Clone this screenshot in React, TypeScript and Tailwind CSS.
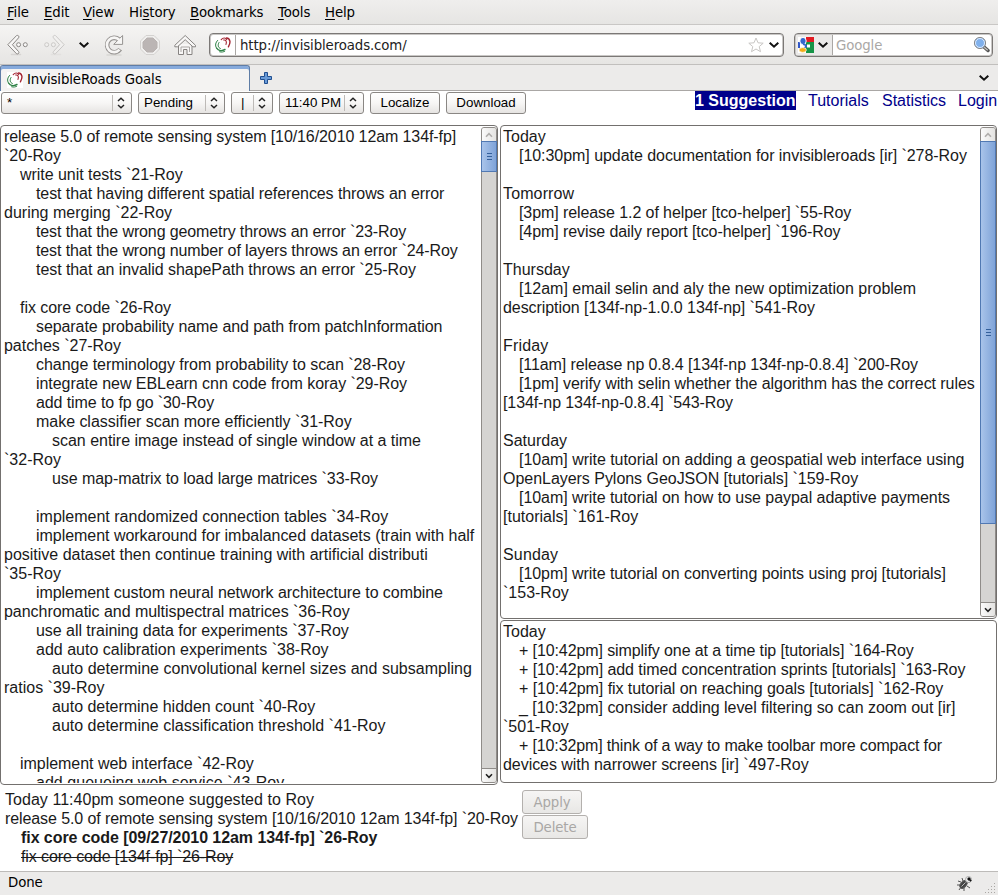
import React from "react";

// [indent level, text, width adjustment of the whole line in px]
type Line = [number, string, number?];

const goals: Line[] = [
  [0, "release 5.0 of remote sensing system [10/16/2010 12am 134f-fp]", -6],
  [0, "`20-Roy"],
  [1, "write unit tests `21-Roy", -1],
  [2, "test that having different spatial references throws an error", -5],
  [0, "during merging `22-Roy"],
  [2, "test that the wrong geometry throws an error `23-Roy", -6],
  [2, "test that the wrong number of layers throws an error `24-Roy", -7],
  [2, "test that an invalid shapePath throws an error `25-Roy", -3.5],
  [0, ""],
  [1, "fix core code `26-Roy", -1],
  [2, "separate probability name and path from patchInformation", -4.5],
  [0, "patches `27-Roy", -0.5],
  [2, "change terminology from probability to scan `28-Roy", -2],
  [2, "integrate new EBLearn cnn code from koray `29-Roy", -2.5],
  [2, "add time to fp go `30-Roy", -2.5],
  [2, "make classifier scan more efficiently `31-Roy", -1.5],
  [3, "scan entire image instead of single window at a time", -1],
  [0, "`32-Roy"],
  [3, "use map-matrix to load large matrices `33-Roy", -3],
  [0, ""],
  [2, "implement randomized connection tables `34-Roy"],
  [2, "implement workaround for imbalanced datasets (train with half", -2],
  [0, "positive dataset then continue training with artificial distributi", -0.5],
  [0, "`35-Roy"],
  [2, "implement custom neural network architecture to combine", -3],
  [0, "panchromatic and multispectral matrices `36-Roy", -2],
  [2, "use all training data for experiments `37-Roy", -2],
  [2, "add auto calibration experiments `38-Roy"],
  [3, "auto determine convolutional kernel sizes and subsampling", 1],
  [0, "ratios `39-Roy"],
  [3, "auto determine hidden count `40-Roy", -1],
  [3, "auto determine classification threshold `41-Roy"],
  [0, ""],
  [1, "implement web interface `42-Roy", -1],
  [2, "add queueing web service `43-Roy", 1],
];

const schedule: Line[] = [
  [0, "Today"],
  [1, "[10:30pm] update documentation for invisibleroads [ir] `278-Roy", -3],
  [0, ""],
  [0, "Tomorrow", 1],
  [1, "[3pm] release 1.2 of helper [tco-helper] `55-Roy", -4],
  [1, "[4pm] revise daily report [tco-helper] `196-Roy", -4],
  [0, ""],
  [0, "Thursday"],
  [1, "[12am] email selin and aly the new optimization problem", -0.5],
  [0, "description [134f-np-1.0.0 134f-np] `541-Roy", -3],
  [0, ""],
  [0, "Friday", 1],
  [1, "[11am] release np 0.8.4 [134f-np 134f-np-0.8.4] `200-Roy", -5.5],
  [1, "[1pm] verify with selin whether the algorithm has the correct rules", -5],
  [0, "[134f-np 134f-np-0.8.4] `543-Roy", -3],
  [0, ""],
  [0, "Saturday"],
  [1, "[10am] write tutorial on adding a geospatial web interface using", -2],
  [0, "OpenLayers Pylons GeoJSON [tutorials] `159-Roy", -1.5],
  [1, "[10am] write tutorial on how to use paypal adaptive payments", -3],
  [0, "[tutorials] `161-Roy"],
  [0, ""],
  [0, "Sunday", 1],
  [1, "[10pm] write tutorial on converting points using proj [tutorials]", -3.5],
  [0, "`153-Roy"],
];

const finished: Line[] = [
  [0, "Today"],
  [1, "+ [10:42pm] simplify one at a time tip [tutorials] `164-Roy", -6],
  [1, "+ [10:42pm] add timed concentration sprints [tutorials] `163-Roy", -5],
  [1, "+ [10:42pm] fix tutorial on reaching goals [tutorials] `162-Roy", -4],
  [1, "_ [10:32pm] consider adding level filtering so can zoom out [ir]", -3],
  [0, "`501-Roy"],
  [1, "+ [10:32pm] think of a way to make toolbar more compact for", -8],
  [0, "devices with narrower screens [ir] `497-Roy", -2],
];

const indents = ["", "pl-4", "pl-8", "pl-12"];

const tracking = (text: string, adjust = 0) =>
  adjust ? { letterSpacing: (adjust / text.length).toFixed(4) + "px" } : undefined;

function Lines({ lines }: { lines: Line[] }) {
  return (
    <div className="min-w-0 flex-1 overflow-hidden whitespace-pre text-[16px] leading-[19px] text-[#1a1a1a]">
      {lines.map(([level, text, adjust], i) => (
        <div key={i} className={"h-[19px] " + indents[level]} style={tracking(text, adjust)}>{text}</div>
      ))}
    </div>
  );
}

function Chevron({ className = "" }: { className?: string }) {
  return (
    <svg className={"shrink-0 " + className} width="12" height="8" viewBox="0 0 12 8" fill="none" stroke="#111" strokeWidth="2">
      <path d="M1.7 1.7 6 5.7 10.3 1.7" />
    </svg>
  );
}

function SmallChevron({ up = false }: { up?: boolean }) {
  return (
    <svg width="8" height="6" viewBox="0 0 8 6" fill="none" stroke={up ? "#b0aeac" : "#222"} strokeWidth="1.6">
      <path d={up ? "M1 4.7 4 1.7 7 4.7" : "M1 1.3 4 4.3 7 1.3"} />
    </svg>
  );
}

function Scrollbar({ thumb }: { thumb: string }) {
  return (
    <div className="flex w-4 shrink-0 flex-col rounded-[3px] border border-[#8f8c89] bg-[#d5d4d2]">
      <div className="flex h-[13px] shrink-0 items-center justify-center rounded-t-[2px] bg-gradient-to-r from-[#fbfbfb] to-[#e4e3e1]">
        <SmallChevron up />
      </div>
      <div className={"-mx-px flex shrink-0 flex-col items-center justify-center gap-[2px] border border-[#5179b3] bg-gradient-to-r from-[#a9c4ea] to-[#7fa3d8] " + thumb}>
        <i className="h-px w-[5px] bg-[#34609b]" />
        <i className="h-px w-[5px] bg-[#34609b]" />
        <i className="h-px w-[5px] bg-[#34609b]" />
      </div>
      <div className="flex-1" />
      <div className="flex h-[14px] shrink-0 items-center justify-center rounded-b-[2px] border-t border-[#8f8c89] bg-gradient-to-r from-[#fbfbfb] to-[#e4e3e1]">
        <SmallChevron />
      </div>
    </div>
  );
}

function Favicon() {
  return (
    <svg className="shrink-0 bg-white" width="16" height="16" viewBox="0 0 16 16" fill="none" strokeLinecap="round">
      <g stroke="#2d8145">
        <path d="M2.6 3.4C.4 5.6 0 8.4 1.2 10.6" strokeWidth="1" />
        <path d="M4 5.5C2.4 8 3 10.6 5.4 11.6" strokeWidth="1" />
        <path d="M1.6 11.2C3.4 14 7 14.4 10 12.4" strokeWidth="1.4" />
        <path d="M4.6 14.8C6.8 15.4 8.6 15 9.8 14.2" strokeWidth="1" />
      </g>
      <g stroke="#a32431">
        <path d="M6.2 2.6C8.2.4 10.6.6 11.6 2.6" strokeWidth="1.1" />
        <path d="M8.6 3C11 2.6 12 4.4 11 7.4" strokeWidth="1.1" />
        <path d="M11.4 1C15.6 1.4 15.8 6 13.4 9.8" strokeWidth="1.4" />
      </g>
    </svg>
  );
}

function BackIcon({ forward = false }: { forward?: boolean }) {
  return (
    <svg className={forward ? "-scale-x-100 opacity-35" : ""} width="22" height="22" viewBox="0 0 22 22" fill="none">
      <path d="M4.5 20.6h9" stroke="#d6d4d2" strokeWidth="1.5" strokeLinecap="round" />
      <path d="M9.6 1.5 .8 10.7l8.8 9.1c1.6.6 3-.9 2-2.2L5.4 10.7l6.2-6.9c1-1.4-.5-2.9-2-2.3Z" fill="#f8f7f6" stroke="#8a8785" strokeLinejoin="round" />
      <circle cx="11.6" cy="10.7" r="2" fill="#f8f7f6" stroke="#8a8785" />
      <circle cx="18.3" cy="10.7" r="2" fill="#f8f7f6" stroke="#8a8785" />
    </svg>
  );
}

function ReloadIcon() {
  return (
    <svg width="22" height="22" viewBox="0 0 22 22" fill="none">
      <path d="M4 21h14" stroke="#d8d6d4" strokeWidth="1.5" strokeLinecap="round" />
      <path d="M17.2 15.2A7.2 7.2 0 1 1 16 5.6" stroke="#969391" strokeWidth="4.6" />
      <path d="M19.6 1.5v8.9h-8.9Z" fill="#f7f6f5" stroke="#969391" strokeLinejoin="round" />
      <path d="M16.5 15.7A7.2 7.2 0 1 1 16.3 5.9" stroke="#f7f6f5" strokeWidth="2.7" />
    </svg>
  );
}

function StopIcon() {
  return (
    <svg width="22" height="22" viewBox="0 0 22 22">
      <path d="M7 1.5h8l5.5 5.5v8L15 20.5H7L1.5 15V7Z" fill="#f0efee" stroke="#d4d2d0" />
      <path d="M8 4h6l4 4v6l-4 4H8l-4-4V8Z" fill="#bbb5b4" stroke="#b8b2b0" />
    </svg>
  );
}

function HomeIcon() {
  return (
    <svg width="22" height="22" viewBox="0 0 22 22" fill="#f8f7f6" stroke="#868381" strokeLinejoin="round">
      <path d="M4.5 10v10.5h5v-5h3.5v5h5V10" />
      <path d="M7 18v-5h8.5v5" fill="none" stroke="#aaa7a5" />
      <path d="M11.2 1.5 21.5 11.3v1.5h-2.6L11.2 5.7l-7.7 7.1H.8v-1.5Z" />
    </svg>
  );
}

function Menu({ label, accel = 0, className }: { label: string; accel?: number; className: string }) {
  return (
    <span className={className}>
      {label.slice(0, accel)}
      <span className="underline underline-offset-2">{label[accel]}</span>
      {label.slice(accel + 1)}
    </span>
  );
}

const control =
  "flex h-[22px] items-center rounded-[3px] border border-[#8a8784] bg-gradient-to-b from-white via-[#f7f6f5] to-[#e6e4e2] text-[13.33px] text-black whitespace-pre ";

function Select({ label, className }: { label: string; className: string }) {
  return (
    <div className={control + className}>
      <span className="flex-1">{label}</span>
      <span className="h-4 w-px bg-[#bdbab7]" />
      <svg className="ml-1 mr-[6px]" width="8" height="12" viewBox="0 0 8 12" fill="none" stroke="#222" strokeWidth="1.5">
        <path d="M1 4 4 1.3 7 4M1 8l3 2.7L7 8" />
      </svg>
    </div>
  );
}

const chromeFont = "font-['DejaVu_Sans',sans-serif] text-[13.33px] leading-[20px] tracking-[-0.12px] ";
const pane = "flex overflow-hidden rounded-[4px] border border-[#73706e] bg-white py-px ";
const field = "flex h-[24px] items-center overflow-hidden rounded-[4px] border border-[#7b7876] bg-white shadow-[inset_0_0_0_1px_#c9c7c5] ";
const disabled =
  chromeFont +
  "flex h-[24px] items-center justify-center rounded-[3px] border border-[#b3b0ad] bg-gradient-to-b from-[#f6f5f4] to-[#e8e7e5] pt-[2px] text-[#a9a7a5] ";

export default function App() {
  const suggestionRelease = "release 5.0 of remote sensing system [10/16/2010 12am 134f-fp] `20-Roy";
  const added = "fix core code [09/27/2010 12am 134f-fp] `26-Roy";
  const removed = "fix core code [134f-fp] `26-Roy";
  return (
    <div className="flex h-[895px] w-[998px] flex-col overflow-hidden bg-white font-['Liberation_Sans',Arial,sans-serif]">
      <nav className={chromeFont + "flex h-[25px] shrink-0 items-center border-b border-[#c9c7c5] bg-gradient-to-b from-[#efeeed] to-[#e6e5e3] pl-[7px] pt-[2px] text-black"}>
        <Menu label="File" className="w-[37px]" />
        <Menu label="Edit" className="w-[39px]" />
        <Menu label="View" className="w-[46px]" />
        <Menu label="History" accel={2} className="w-[61px]" />
        <Menu label="Bookmarks" className="w-[88px]" />
        <Menu label="Tools" className="w-[47px]" />
        <Menu label="Help" className="w-[40px]" />
      </nav>

      <div className={chromeFont + "flex h-[40px] shrink-0 items-center border-b border-[#c1bfbd] bg-gradient-to-b from-[#f5f4f3] to-[#e6e5e3] pl-[7px]"}>
        <BackIcon />
        <div className="ml-[14px]"><BackIcon forward /></div>
        <Chevron className="ml-[13px]" />
        <div className="ml-[13px]"><ReloadIcon /></div>
        <div className="ml-[14px]"><StopIcon /></div>
        <div className="ml-[13px]"><HomeIcon /></div>
        <div className={field + "ml-[13px] w-[575px] pl-[5px]"}>
          <Favicon />
          <span className="ml-1 h-5 w-px bg-[#aaa7a4]" />
          <span className="ml-[4px] flex-1 pt-[2px] text-[#222]">http://invisibleroads.com/</span>
          <svg width="16" height="16" viewBox="0 0 16 16" fill="none" stroke="#c8c6c4"><path d="m8 1 2 4.8 5.2.4-4 3.4 1.3 5.1L8 12l-4.5 2.7 1.3-5.1-4-3.4L6 5.8Z" /></svg>
          <Chevron className="ml-1 mr-[3px]" />
        </div>
        <div className={field + "ml-[10px] w-[199px] p-px"}>
          <div className="flex h-full w-[37px] items-center border-r border-[#aaa7a4] bg-[#ebeae9] pl-[2px]">
            <svg className="shrink-0" width="16" height="16" viewBox="0 0 16 16">
              <path d="M0 0h16v16H0Z" fill="#fff" />
              <path d="M8 0h8v5H8Z" fill="#e31b23" />
              <path d="M8 5h8v11H8Z" fill="#159447" />
              <path d="M0 5h2v6H0Z" fill="#3157c8" />
              <ellipse cx="5" cy="4" rx="3.2" ry="3.6" fill="#3366cc" stroke="#fff" />
              <path d="M5 7c4 1 4 3 1 4" fill="none" stroke="#3366cc" strokeWidth="2" />
              <path d="M9 7.5h3v3H9Z" fill="#fff" />
              <ellipse cx="4.7" cy="13" rx="3.7" ry="2.4" fill="#f1ad18" stroke="#fff" strokeWidth=".7" />
            </svg>
            <Chevron className="ml-[3px]" />
          </div>
          <span className="ml-[3px] flex-1 pt-[2px] text-[#aaa8a6]">Google</span>
          <svg className="mr-[1px]" width="17" height="17" viewBox="0 0 17 17">
            <path d="m10.5 10.5 4.5 4" stroke="#555" strokeWidth="3.4" strokeLinecap="round" />
            <path d="m11.2 11.2 3.5 3.1" stroke="#c6c5c2" strokeWidth="1.2" />
            <circle cx="7" cy="7" r="5.6" fill="#7fb0ec" stroke="#888" />
            <circle cx="7" cy="7" r="4.5" fill="none" stroke="#dceafe" />
          </svg>
        </div>
      </div>

      <div className={chromeFont + "flex h-[26px] shrink-0 bg-[#ecebea]"}>
        <div className="flex w-[250px] items-center rounded-t-[3px] border-x border-t border-[#5f7da6] bg-[#f4f3f2] shadow-[inset_0_3px_#86aadc] pl-[6px] pt-[3px]">
          <Favicon />
          <span className="ml-1 text-black">InvisibleRoads Goals</span>
        </div>
        <div className="flex flex-1 items-center border-b border-[#aaa7a5] pl-[10px] pr-2">
          <svg width="12" height="12" viewBox="0 0 12 12"><path d="M4.5.5h3v4h4v3h-4v4h-3v-4h-4v-3h4Z" fill="#699bd8" stroke="#204f91" /></svg>
          <span className="flex-1" />
          <Chevron />
        </div>
      </div>

      <div className="flex h-[34px] shrink-0 items-start pl-px">
        <div className="flex pt-px">
          <Select label="*" className="w-[131px] pl-[5px]" />
          <Select label="Pending" className="ml-[6px] w-[87px] pl-[5px]" />
          <Select label="|" className="ml-[6px] w-[42px] pl-[9px]" />
          <Select label="11:40 PM" className="ml-[6px] w-[85px] pl-[5px]" />
          <div className={control + "ml-[6px] w-[70px] justify-center"}>Localize</div>
          <div className={control + "ml-[6px] w-[80px] justify-center"}>Download</div>
        </div>
        <div className="ml-auto flex whitespace-nowrap text-[16px] leading-[19px] text-[#00008b]">
          <b className="w-[101px] bg-[#00008b] text-white">1 Suggestion</b>
          <span className="ml-3 w-[62px]">Tutorials</span>
          <span className="ml-3 w-[64px]">Statistics</span>
          <span className="ml-3 w-[40px]">Login</span>
        </div>
      </div>

      <main className="flex h-[660px] shrink-0 gap-[2px] pr-px">
        <section className={pane + "w-[498px] pl-[3px]"}>
          <Lines lines={goals} />
          <Scrollbar thumb="h-[31px]" />
        </section>
        <div className="flex w-[497px] flex-col gap-px">
          <section className={pane + "h-[494px] pl-[2px]"}>
            <Lines lines={schedule} />
            <Scrollbar thumb="h-[383px]" />
          </section>
          <section className={pane + "h-[163px] pl-[2px]"}>
            <Lines lines={finished} />
          </section>
        </div>
      </main>

      <footer className="flex h-[86px] shrink-0 items-start pl-[5px] pt-[5px]">
        <div className="w-[517px] whitespace-pre text-[16px] leading-[19px] text-[#1a1a1a]">
          <div style={tracking("Today 11:40pm someone suggested to Roy", 1.5)}>Today 11:40pm someone suggested to Roy</div>
          <div style={tracking(suggestionRelease, -6.5)}>{suggestionRelease}</div>
          <div className="pl-4 font-bold" style={tracking(added, -3)}>{added}</div>
          <div className="pl-4" style={tracking(removed, -3)}><s>{removed}</s></div>
        </div>
        <div className="flex flex-col gap-px">
          <div className={disabled + "w-[60px]"}>Apply</div>
          <div className={disabled + "w-[66px]"}>Delete</div>
        </div>
      </footer>

      <div className={chromeFont + "flex h-[24px] shrink-0 items-center border-t border-[#bdbbb9] bg-[#ecebea] pl-2 text-black"}>
        <span className="flex-1 pb-[2px]">Done</span>
        <svg width="17" height="16" viewBox="0 0 17 16" fill="none" stroke="#555">
          <path d="M5 6 2 5M4 9H1M5 11l-2 3M8 12v3M11 10l3 2M10 7l4-1M7 5 6 2" />
          <ellipse cx="7.5" cy="8.5" rx="2.7" ry="4.4" transform="rotate(42 7.5 8.5)" fill="#444" />
          <path d="m5.5 10.5 4-4" stroke="#bbb" />
          <circle cx="12.5" cy="3.5" r="3" fill="#eee" stroke="#aaa" />
          <path d="M12 2h2v2h-2zM14 4h1v1h-1z" fill="#111" stroke="#111" />
        </svg>
        <svg className="ml-[11px] mr-[2px] self-end" width="12" height="12" viewBox="0 0 12 12" fill="#aaa7a4">
          <path d="M10 0h1v1h-1zM10 3h1v1h-1zM7 3h1v1H7zM10 6h1v1h-1zM7 6h1v1H7zM4 6h1v1H4zM10 9h1v1h-1zM7 9h1v1H7zM4 9h1v1H4zM1 9h1v1H1z" />
        </svg>
      </div>
    </div>
  );
}
